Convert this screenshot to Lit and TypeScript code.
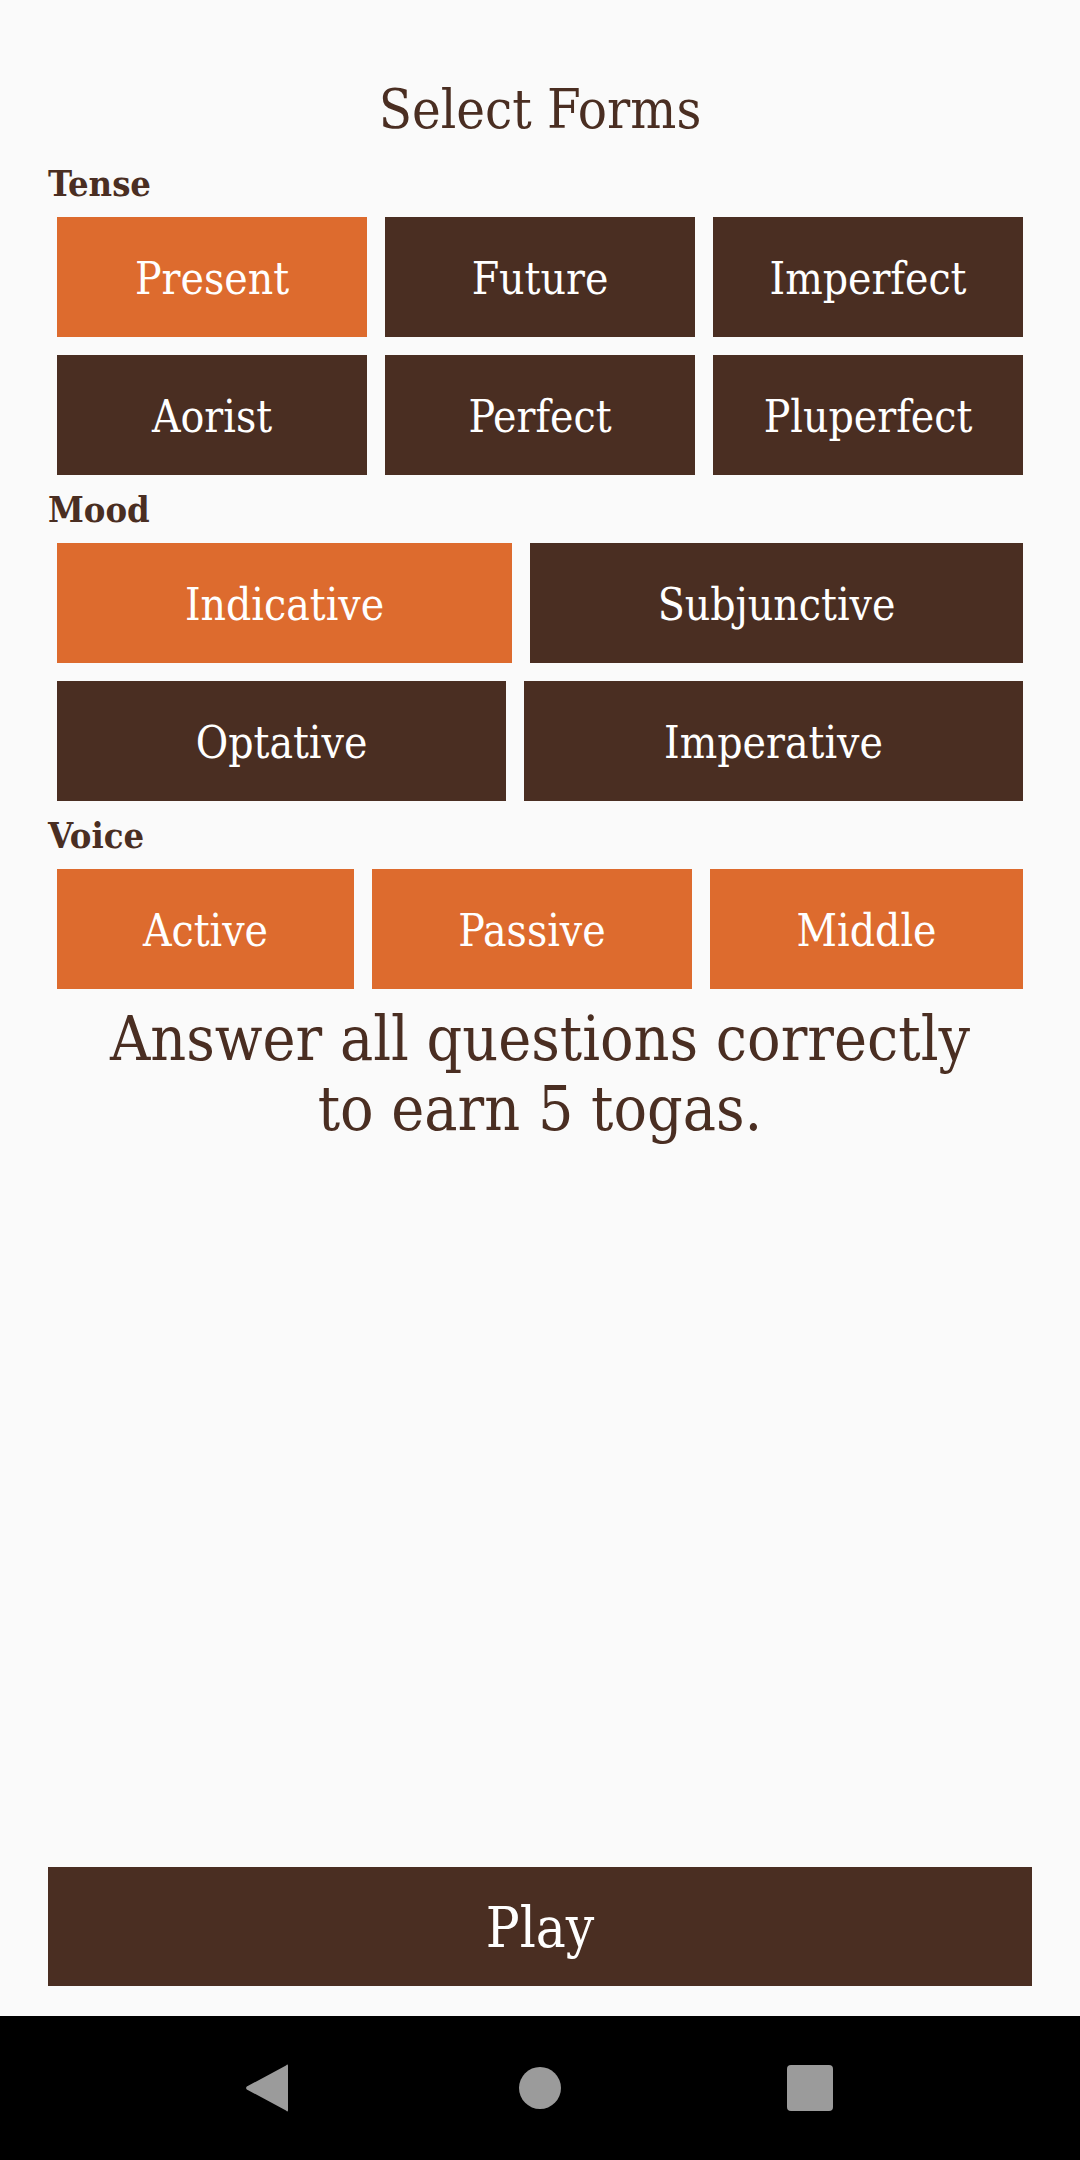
import { LitElement, html, css } from 'lit';
import { customElement } from 'lit/decorators.js';

type Option = { label: string; on?: boolean };
type Row = { cols: string; options: Option[] };
type Section = { title: string; rows: Row[] };

const SECTIONS: Section[] = [
  {
    title: 'Tense',
    rows: [
      { cols: '1fr 1fr 1fr', options: [{ label: 'Present', on: true }, { label: 'Future' }, { label: 'Imperfect' }] },
      { cols: '1fr 1fr 1fr', options: [{ label: 'Aorist' }, { label: 'Perfect' }, { label: 'Pluperfect' }] },
    ],
  },
  {
    title: 'Mood',
    rows: [
      { cols: '455fr 493fr', options: [{ label: 'Indicative', on: true }, { label: 'Subjunctive' }] },
      { cols: '449fr 499fr', options: [{ label: 'Optative' }, { label: 'Imperative' }] },
    ],
  },
  {
    title: 'Voice',
    rows: [
      {
        cols: '297fr 320fr 313fr',
        options: [
          { label: 'Active', on: true },
          { label: 'Passive', on: true },
          { label: 'Middle', on: true },
        ],
      },
    ],
  },
];

@customElement('app-root')
export class AppRoot extends LitElement {
  static styles = css`
    :host {
      display: flex;
      flex-direction: column;
      height: 2160px;
      background: #fafafa;
      color: #4a2e22;
      font-family: 'DejaVu Serif Condensed', 'DejaVu Serif', serif;
      font-stretch: condensed;
    }

    .content {
      flex: 1;
      display: flex;
      flex-direction: column;
      padding: 73px 48px 30px;
    }

    h1 {
      margin: 0 0 11px;
      font-size: 54px;
      line-height: 74px;
      font-weight: 400;
      text-align: center;
    }

    .section-title {
      font-size: 36px;
      line-height: 50px;
      font-weight: 700;
    }

    .rows {
      display: flex;
      flex-direction: column;
      gap: 18px;
      padding: 9px;
    }

    .row {
      display: grid;
      gap: 18px;
    }

    .option,
    .play {
      border: 0;
      background: #4a2e22;
      color: #fff;
      font: inherit;
      font-stretch: inherit;
    }

    .option {
      height: 120px;
      padding: 2px 0 0;
      font-size: 44px;
    }

    .option.on {
      background: #dd6b2e;
    }

    .reward {
      margin: 6px 0 0;
      font-size: 62px;
      line-height: 70px;
      text-align: center;
    }

    .play {
      margin-top: auto;
      height: 119px;
      padding: 2px 0 0;
      font-size: 56px;
    }

    .nav {
      height: 144px;
      background: #000;
      display: flex;
      align-items: center;
      justify-content: center;
      gap: 223px;
    }

    .nav svg {
      width: 48px;
      height: 48px;
      fill: #9b9b9b;
    }
  `;

  private renderSection(section: Section) {
    return html`
      <div class="section-title">${section.title}</div>
      <div class="rows">
        ${section.rows.map(
          (row) => html`
            <div class="row" style="grid-template-columns: ${row.cols}">
              ${row.options.map(
                (o) => html`<button class="option ${o.on ? 'on' : ''}">${o.label}</button>`
              )}
            </div>
          `
        )}
      </div>
    `;
  }

  render() {
    return html`
      <div class="content">
        <h1>Select Forms</h1>
        ${SECTIONS.map((s) => this.renderSection(s))}
        <p class="reward">Answer all questions correctly<br />to earn 5 togas.</p>
        <button class="play">Play</button>
      </div>
      <div class="nav">
        <svg viewBox="0 0 48 48"><path d="M43 2 V46 Q43 48.5 41 46.5 L1.8 25.5 Q0.4 24 1.8 22.5 L41 1.5 Q43 -0.5 43 2 Z" /></svg>
        <svg viewBox="0 0 48 48"><circle cx="24" cy="24" r="21" /></svg>
        <svg viewBox="0 0 48 48"><rect x="0" y="1" width="46" height="46" rx="4" /></svg>
      </div>
    `;
  }
}

declare global {
  interface HTMLElementTagNameMap {
    'app-root': AppRoot;
  }
}
